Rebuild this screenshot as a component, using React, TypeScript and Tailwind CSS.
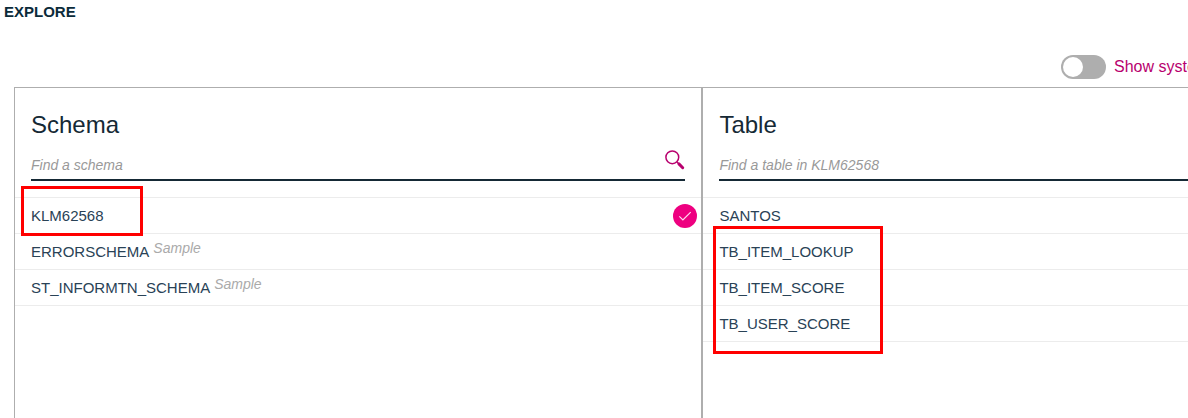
import React from "react";

type Entry = { name: string; sample?: boolean; selected?: boolean };

const schemas: Entry[] = [
  { name: "KLM62568", selected: true },
  { name: "ERRORSCHEMA", sample: true },
  { name: "ST_INFORMTN_SCHEMA", sample: true },
];

const tables: Entry[] = [
  { name: "SANTOS" },
  { name: "TB_ITEM_LOOKUP" },
  { name: "TB_ITEM_SCORE" },
  { name: "TB_USER_SCORE" },
];

function SearchIcon() {
  return (
    <svg width="20" height="20" viewBox="0 0 20 20" fill="none" aria-hidden="true">
      <circle cx="7.3" cy="7.3" r="6.4" stroke="#b8006e" strokeWidth="1.5" />
      <path d="M11.9 11.9l1.6 1.6" stroke="#b8006e" strokeWidth="1.3" />
      <path d="M13.9 13.9l3.8 3.8" stroke="#b8006e" strokeWidth="3" strokeLinecap="round" />
    </svg>
  );
}

function CheckBadge() {
  return (
    <svg width="24" height="24" viewBox="0 0 24 24" fill="none" className="shrink-0" role="img" aria-label="Selected">
      <circle cx="12" cy="12" r="12" fill="#ee0080" />
      <path d="M6.3 12.4l3.6 3.5 7.8-7.8" stroke="#ffd9ee" strokeWidth="1.2" />
    </svg>
  );
}

function SearchField({ id, label, placeholder, icon }: { id: string; label: string; placeholder: string; icon?: boolean }) {
  return (
    <div className="flex h-10 items-center border-b-2 border-[#152935]">
      <input
        id={id}
        type="text"
        aria-label={label}
        placeholder={placeholder}
        className="h-full min-w-0 flex-1 bg-transparent pt-2.5 text-sm italic text-[#152935] outline-none placeholder:text-[#999999]"
      />
      {icon && (
        <button type="button" aria-label="Search" className="shrink-0">
          <SearchIcon />
        </button>
      )}
    </div>
  );
}

function EntryList({ entries, children }: { entries: Entry[]; children?: React.ReactNode }) {
  return (
    <div className="relative mt-4 border-t border-[#ececec]">
      <ul>
        {entries.map((entry) => (
          <li key={entry.name} className="h-9 border-b border-[#ececec]">
            <button type="button" className="flex h-full w-full items-center justify-between pl-4 pr-1 text-left text-[#294256]">
              <span className="flex text-[15px] leading-6">
                {entry.name}
                {entry.sample && <span className="-mt-1 ml-1 text-sm leading-6 italic text-[#aaaaaa]">Sample</span>}
              </span>
              {entry.selected && <CheckBadge />}
            </button>
          </li>
        ))}
      </ul>
      {children}
    </div>
  );
}

export default function App() {
  return (
    <div className="flex min-h-screen flex-col overflow-hidden bg-white font-['Liberation_Sans',Arial,sans-serif] text-[#152935]">
      <h1 className="pl-1 text-[15px] leading-6 font-bold text-[#0b2b3a]">EXPLORE</h1>
      <div className="mt-[31px] flex h-6 justify-end">
        <label className="flex w-[127px] items-center gap-2 overflow-hidden whitespace-nowrap text-base text-[#b8006e]">
          <input
            type="checkbox"
            role="switch"
            className="h-6 w-[45px] shrink-0 appearance-none rounded-full bg-[#aeaeae] p-0.5 before:block before:size-5 before:rounded-full before:bg-white checked:bg-[#b8006e] checked:before:ml-5"
          />
          Show system
        </label>
      </div>
      <main className="ml-3.5 mt-2 grid flex-1 grid-cols-[689fr_485fr] border-l border-t border-[#aeaeae]">
        <section className="min-w-0 border-r-2 border-[#aeaeae] pt-[21px]">
          <div className="px-4">
            <h2 className="text-2xl">Schema</h2>
            <SearchField id="schema-search" label="Find a schema" placeholder="Find a schema" icon />
          </div>
          <EntryList entries={schemas}>
            <div className="pointer-events-none absolute -top-3 left-1.5 h-[50px] w-[122px] border-3 border-[#ff0000]" />
          </EntryList>
        </section>
        <section className="min-w-0 pt-[21px]">
          <div className="pl-4">
            <h2 className="text-2xl">Table</h2>
            <SearchField id="table-search" label="Find a table in KLM62568" placeholder="Find a table in KLM62568" />
          </div>
          <EntryList entries={tables}>
            <div className="pointer-events-none absolute left-2.5 top-7 h-32 w-[170px] border-3 border-[#ff0000]" />
          </EntryList>
        </section>
      </main>
    </div>
  );
}
